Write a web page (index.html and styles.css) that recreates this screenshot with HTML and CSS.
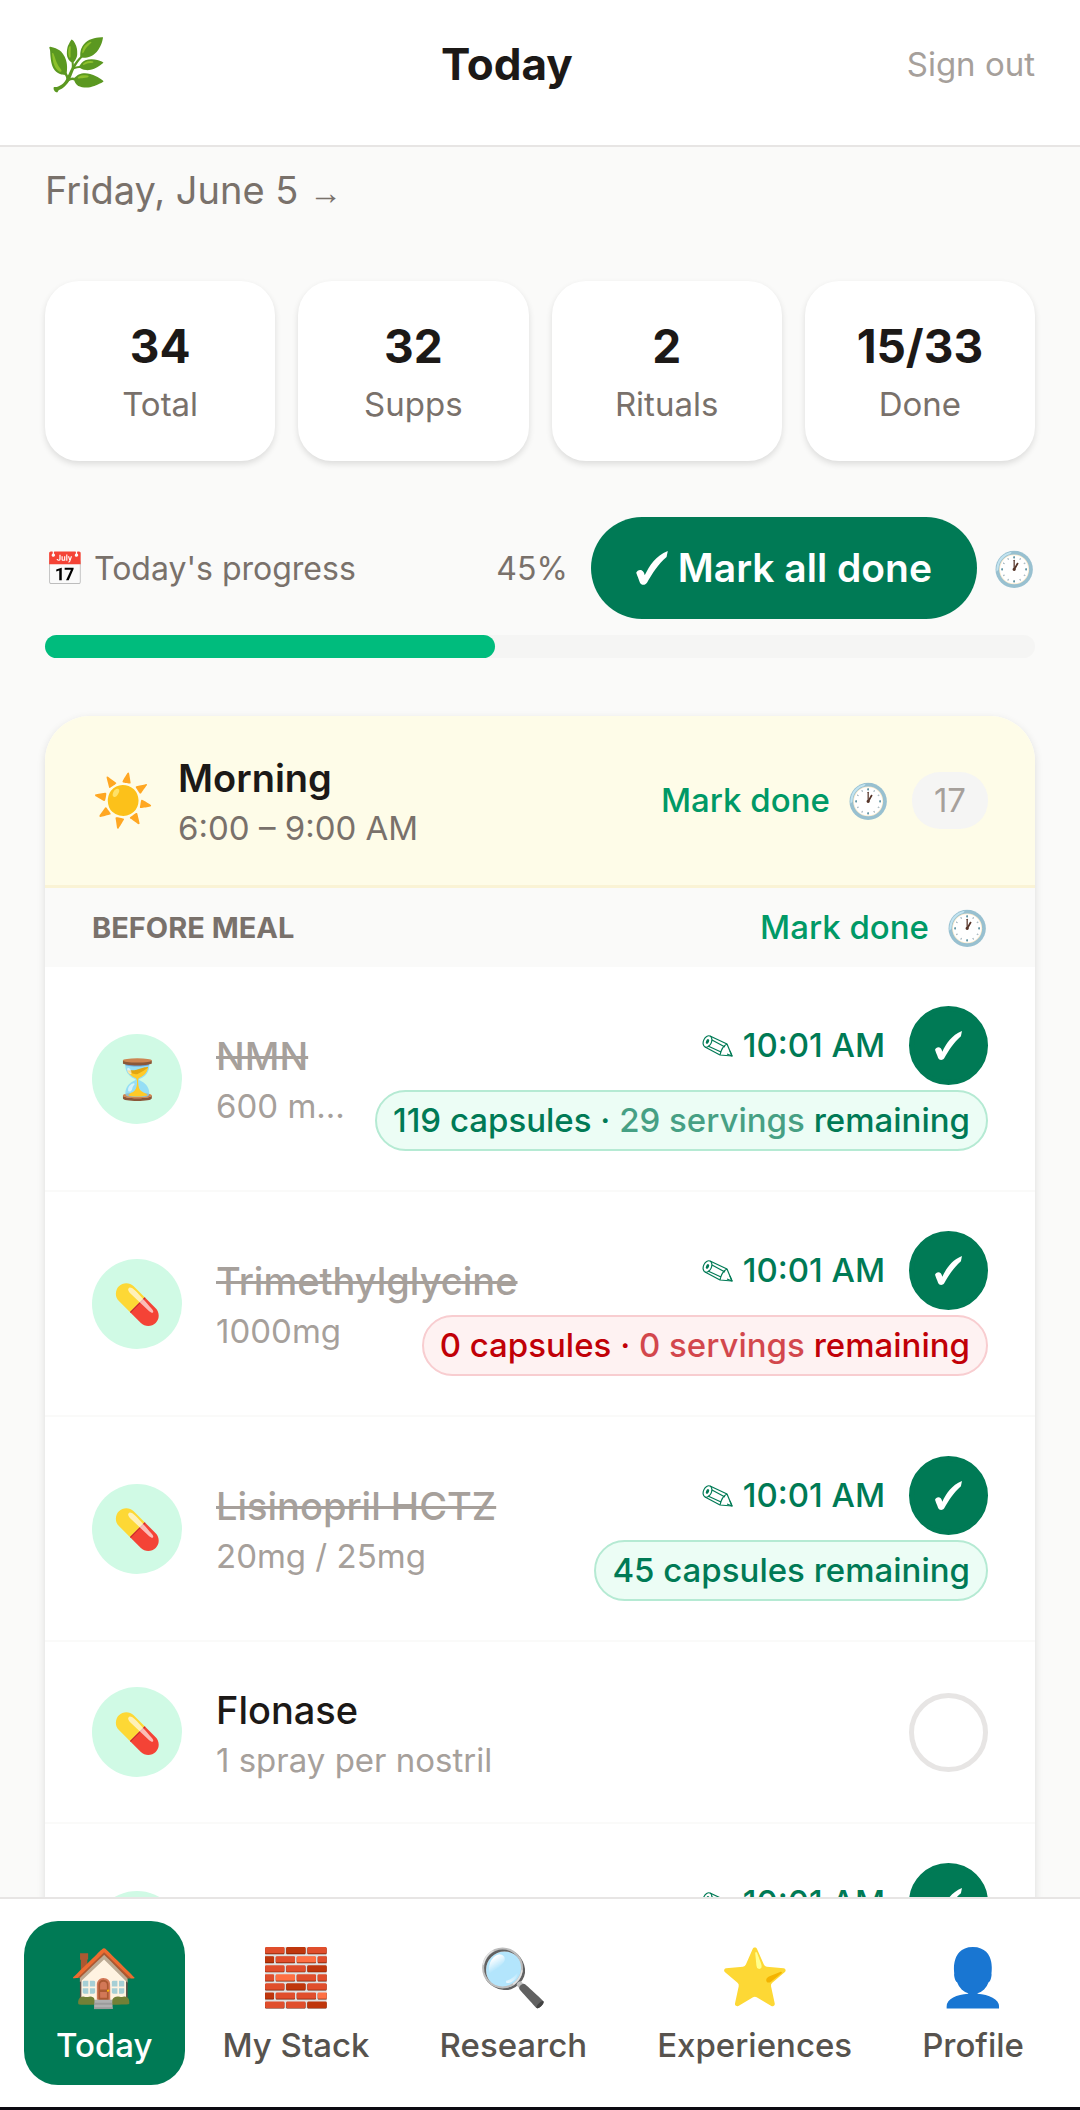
FILE: index.html
```
<!DOCTYPE html>
<html lang="en">
<head>
  <meta charset="UTF-8" />
  <meta name="viewport" content="width=device-width, initial-scale=1.0"/>
  <title>Today</title>
  <link rel="stylesheet" href="styles.css">
</head>
<body>
  <!-- shared icons -->
  <svg class="sprite" aria-hidden="true">
    <symbol id="tick" viewBox="0 0 26 28">
      <path d="M0 18C1 15 6 14 7 20C11 12 16 4 26 0L25 5C18 11 13 19 9 26C7 29 4 28 3 26C2 23 1 21 0 18Z" fill="currentColor"/>
    </symbol>
    <symbol id="pencil" viewBox="0 0 31 22">
      <g fill="none" stroke="currentColor" stroke-width="1.2" stroke-linejoin="round">
        <path d="M8 1L25 9L30 21L18 20L3 12"/>
        <path d="M25 9C21 11 19 15 18 20M10 5L23 12M6 11L19 17M25 19L30 21L28 16"/>
        <ellipse cx="5.500" cy="6.500" rx="4" ry="6" transform="rotate(24 5.500 6.500)"/>
      </g>
      <ellipse cx="5.500" cy="6.500" rx="1.500" ry="2.500" transform="rotate(24 5.500 6.500)" fill="currentColor"/>
    </symbol>
  </svg>

  <header class="topbar">
    <span class="logo">🌿</span>
    <h1>Today</h1>
    <button class="sign-out" type="button">Sign out</button>
  </header>

  <main class="content">
    <p class="date">Friday, June 5 <span class="arrow">→</span></p>

    <div class="stats">
      <div class="stat"><strong>34</strong><span>Total</span></div>
      <div class="stat"><strong>32</strong><span>Supps</span></div>
      <div class="stat"><strong>2</strong><span>Rituals</span></div>
      <div class="stat"><strong>15/33</strong><span>Done</span></div>
    </div>

    <div class="progress-row">
      <span class="progress-label">📅 Today's progress</span>
      <span class="percent">45%</span>
      <button class="mark-all" type="button"><svg class="tick"><use href="#tick"/></svg>Mark all done</button>
      <button class="clock" type="button" aria-label="Set time for all">🕐</button>
    </div>
    <div class="bar" role="progressbar" aria-label="Today's progress" aria-valuenow="45">
      <div class="bar-fill" style="width: 45.45%"></div>
    </div>

    <section class="card">
      <div class="card-header">
        <span class="sun">☀️</span>
        <div class="card-title">
          <h2>Morning</h2>
          <p>6:00 – 9:00 AM</p>
        </div>
        <button class="mark-done" type="button">Mark done</button>
        <button class="clock" type="button" aria-label="Set morning time">🕐</button>
        <span class="count">17</span>
      </div>

      <div class="meal-header">
        <h3>BEFORE MEAL</h3>
        <button class="mark-done" type="button">Mark done</button>
        <button class="clock" type="button" aria-label="Set before meal time">🕐</button>
      </div>

      <ul class="items">
        <li class="item done">
          <span class="item-icon">⏳</span>
          <div class="item-info">
            <p class="name">NMN</p>
            <p class="dose">600 m…</p>
          </div>
          <div class="actions">
            <div class="taken">
              <button class="time" type="button"><svg class="pencil"><use href="#pencil"/></svg>10:01 AM</button>
              <label class="check"><input type="checkbox" aria-label="NMN" checked><svg class="tick"><use href="#tick"/></svg></label>
            </div>
            <span class="chip">119 capsules · <span class="servings">29 servings</span> remaining</span>
          </div>
        </li>
        <li class="item done">
          <span class="item-icon">💊</span>
          <div class="item-info">
            <p class="name">Trimethylglycine</p>
            <p class="dose">1000mg</p>
          </div>
          <div class="actions">
            <div class="taken">
              <button class="time" type="button"><svg class="pencil"><use href="#pencil"/></svg>10:01 AM</button>
              <label class="check"><input type="checkbox" aria-label="Trimethylglycine" checked><svg class="tick"><use href="#tick"/></svg></label>
            </div>
            <span class="chip empty">0 capsules · <span class="servings">0 servings</span> remaining</span>
          </div>
        </li>
        <li class="item done">
          <span class="item-icon">💊</span>
          <div class="item-info">
            <p class="name">Lisinopril HCTZ</p>
            <p class="dose">20mg / 25mg</p>
          </div>
          <div class="actions">
            <div class="taken">
              <button class="time" type="button"><svg class="pencil"><use href="#pencil"/></svg>10:01 AM</button>
              <label class="check"><input type="checkbox" aria-label="Lisinopril HCTZ" checked><svg class="tick"><use href="#tick"/></svg></label>
            </div>
            <span class="chip">45 capsules remaining</span>
          </div>
        </li>
        <li class="item">
          <span class="item-icon">💊</span>
          <div class="item-info">
            <p class="name">Flonase</p>
            <p class="dose">1 spray per nostril</p>
          </div>
          <div class="actions">
            <label class="check"><input type="checkbox" aria-label="Flonase"></label>
          </div>
        </li>
        <li class="item done">
          <span class="item-icon"></span>
          <div class="item-info"></div>
          <div class="actions">
            <div class="taken">
              <button class="time" type="button"><svg class="pencil"><use href="#pencil"/></svg>10:01 AM</button>
              <label class="check"><input type="checkbox" aria-label="Supplement" checked><svg class="tick"><use href="#tick"/></svg></label>
            </div>
            <span class="chip"></span>
          </div>
        </li>
      </ul>
    </section>
  </main>

  <nav class="tabs">
    <a class="tab active" href="#today"><span class="tab-icon">🏠</span>Today</a>
    <a class="tab" href="#stack"><span class="tab-icon">🧱</span>My Stack</a>
    <a class="tab" href="#research"><span class="tab-icon">🔍</span>Research</a>
    <a class="tab" href="#experiences"><span class="tab-icon">⭐</span>Experiences</a>
    <a class="tab" href="#profile"><span class="tab-icon">👤</span>Profile</a>
  </nav>
</body>
</html>
```
FILE: styles.css
```
* {
  box-sizing: border-box;
  margin: 0;
  padding: 0;
}
body {
  display: flex;
  flex-direction: column;
  height: 100vh;
  background: #fafaf9;
  color: #1c1917;
  font-family: Inter, sans-serif;
  font-size: 33px;
  line-height: 45px;
}
button {
  border: none;
  background: none;
  color: inherit;
  font: inherit;
  white-space: nowrap;
}
.sprite {
  display: none;
}

/* header */
.topbar {
  flex: none;
  display: flex;
  align-items: center;
  justify-content: space-between;
  padding: 28px 45px 45px;
  background: #fff;
  border-bottom: 2px solid #e7e5e4;
}
.logo {
  font-size: 50px;
  line-height: 72px;
}
h1 {
  font-size: 44px;
  font-weight: 700;
}
.sign-out {
  color: #a6a09b;
}

/* content */
.content {
  flex: 1;
  min-height: 0;
  overflow-y: auto;
  scrollbar-width: none;
  padding: 15px 45px 0;
}
.date {
  color: #79716b;
  font-size: 38px;
  line-height: 56px;
}
.arrow {
  font-family: "Liberation Sans", sans-serif;
  font-size: 33px;
}
.stats {
  display: grid;
  grid-template-columns: repeat(4, 1fr);
  gap: 23px;
  margin-top: 60px;
}
.stat {
  display: flex;
  flex-direction: column;
  align-items: center;
  gap: 4px;
  padding: 34px 0;
  background: #fff;
  border-radius: 34px;
  box-shadow: 0 3px 6px rgba(0, 0, 0, 0.12);
  color: #79716b;
}
.stat strong {
  color: #1c1917;
  font-size: 46px;
  line-height: 63px;
}
.progress-row {
  display: flex;
  align-items: center;
  margin-top: 56px;
  color: #79716b;
}
.progress-label {
  flex: 1;
  font-size: 32px;
}
.percent {
  font-size: 32px;
}
.mark-all {
  display: flex;
  align-items: center;
  gap: 10px;
  margin: 0 16px 0 23px;
  padding: 23px 45px;
  border-radius: 51px;
  background: #007a55;
  color: #fff;
  font-size: 39px;
  font-weight: 600;
  line-height: 56px;
}
.mark-all .tick {
  width: 32px;
  height: 34px;
}
.clock {
  font-size: 34px;
}
.bar {
  height: 23px;
  margin-top: 16px;
  border-radius: 12px;
  background: #f5f5f4;
}
.bar-fill {
  height: 100%;
  border-radius: 12px;
  background: #00bc7d;
}

/* morning card */
.card {
  margin-top: 58px;
  overflow: hidden;
  background: #fff;
  border-radius: 45px;
  box-shadow: 0 3px 8px rgba(0, 0, 0, 0.12);
}
.card-header {
  display: flex;
  align-items: center;
  padding: 34px 47px;
  background: #fefce8;
  border-bottom: 3px solid #faf3d5;
}
.sun {
  font-size: 50px;
}
.card-title {
  flex: 1;
  margin-left: 24px;
  color: #79716b;
}
h2 {
  color: #1c1917;
  font-size: 38px;
  font-weight: 600;
  line-height: 56px;
}
.mark-done {
  margin-right: 17px;
  color: #009966;
  font-weight: 500;
}
.count {
  margin-left: 23px;
  padding: 6px 22px;
  border-radius: 28px;
  background: #f5f5f4;
  color: #a6a09b;
}
.meal-header {
  display: flex;
  align-items: center;
  padding: 17px 47px;
  background: #fafaf9;
}
h3 {
  flex: 1;
  color: #79716b;
  font-size: 29px;
  font-weight: 700;
}

.items {
  list-style: none;
}
.item {
  display: flex;
  align-items: center;
  min-height: 182px;
  padding: 39px 47px;
  border-bottom: 2px solid #fafaf9;
}
.item-icon {
  display: flex;
  align-items: center;
  justify-content: center;
  width: 90px;
  height: 90px;
  border-radius: 50%;
  background: #d0fae5;
  font-size: 39px;
}
.item-info {
  flex: 1;
  min-width: 0;
  margin: 0 34px;
  white-space: nowrap;
}
.name {
  font-size: 38px;
  font-weight: 500;
  line-height: 56px;
}
.done .name {
  color: #a6a09b;
  text-decoration: line-through;
}
.dose {
  color: #a6a09b;
}
.actions {
  display: flex;
  flex-direction: column;
  align-items: flex-end;
  gap: 5px;
}
.taken {
  display: flex;
  align-items: center;
  gap: 24px;
}
.time {
  display: flex;
  align-items: center;
  gap: 10px;
  color: #007a55;
  font-weight: 500;
}
.pencil {
  width: 31px;
  height: 22px;
}
.check {
  display: grid;
  place-items: center;
  color: #fff;
}
.check input,
.check svg {
  grid-area: 1 / 1;
}
.check input {
  appearance: none;
  width: 79px;
  height: 79px;
  border: 5px solid #e7e5e4;
  border-radius: 50%;
}
.check input:checked {
  border-color: #007a55;
  background: #007a55;
}
.check .tick {
  width: 27px;
  height: 29px;
  pointer-events: none;
}
.chip {
  min-height: 61px;
  padding: 6px 16px;
  border: 2px solid #b5ead3;
  border-radius: 31px;
  background: #ecfdf5;
  color: #007a55;
  font-weight: 500;
  white-space: nowrap;
}
.chip.empty {
  border-color: #f8cdd0;
  background: #fef2f2;
  color: #c10007;
}
.servings {
  opacity: 0.7;
}

/* bottom tabs */
.tabs {
  flex: none;
  display: flex;
  justify-content: space-between;
  padding: 22px 24px;
  background: #fff;
  border-top: 2px solid #e7e5e4;
  border-bottom: 3px solid #0c0a12;
}
.tab {
  display: flex;
  flex-direction: column;
  align-items: center;
  gap: 6px;
  padding: 17px 32px;
  border-radius: 34px;
  color: #57534e;
  font-weight: 500;
  text-decoration: none;
}
.tab.active {
  background: #007a55;
  color: #fff;
}
.tab-icon {
  font-size: 56px;
  line-height: 79px;
}
```
